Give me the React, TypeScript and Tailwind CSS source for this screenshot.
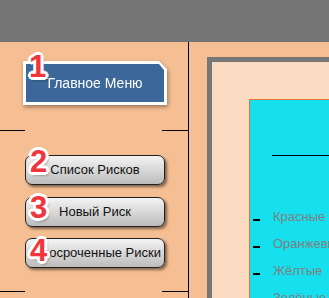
import type { ReactNode } from "react"

const numStyle =
	"absolute font-bold text-[31px] leading-none text-[#f2343c] [font-family:'Liberation_Sans',Arial,sans-serif] [text-shadow:2px_0_0_#fff,-2px_0_0_#fff,0_2px_0_#fff,0_-2px_0_#fff,2px_2px_0_#fff,-2px_-2px_0_#fff,2px_-2px_0_#fff,-2px_2px_0_#fff,3px_0_0_#fff,-3px_0_0_#fff,0_3px_0_#fff,0_-3px_0_#fff,2px_3px_3px_rgba(0,0,0,0.45)]"

function Badge({ n, className }: { n: string; className: string }) {
	return <span className={`${numStyle} ${className}`}>{n}</span>
}

function GrayButton({ children, className }: { children: ReactNode; className: string }) {
	return (
		<div
			className={`w-[140px] h-[30px] rounded-[7px] border border-[#222] bg-gradient-to-b from-[#f4f4f4] to-[#bcbcbc] shadow-[2px_2px_3px_rgba(0,0,0,0.5)] flex items-center justify-center overflow-hidden whitespace-nowrap text-[13px] text-[#111] ${className}`}>
			{children}
		</div>
	)
}

function Divider() {
	return (
		<div className="flex justify-between">
			<div className="w-[25px] h-px bg-black" />
			<div className="w-[26px] h-px bg-black" />
		</div>
	)
}

export default function App() {
	return (
		<div className="w-[329px] h-[298px] overflow-hidden flex flex-col [font-family:'Liberation_Sans',Arial,sans-serif]">
			{/* top band */}
			<div className="h-[42px] bg-[#757575] shrink-0" />

			<div className="flex flex-1 bg-[#f6bf93]">
				{/* left menu */}
				<div className="relative w-[189px] shrink-0 border-r border-black flex flex-col">
					<div className="ml-[23px] mt-[19px] w-[144px] h-[44px] [filter:drop-shadow(1px_2px_2px_rgba(0,0,0,0.4))]">
						<div className="w-full h-full bg-white p-[3px] [clip-path:polygon(0_0,136px_0,100%_8px,100%_100%,0_100%)]">
							<div className="w-full h-full bg-[#3b679b] flex items-center justify-center text-white text-[14px] pt-[1px] [clip-path:polygon(0_0,133px_0,100%_6px,100%_100%,0_100%)]">
								Главное Меню
							</div>
						</div>
					</div>
					<Badge n="1" className="left-[29px] top-[9px]" />

					<div className="mt-[25px]">
						<Divider />
					</div>

					<GrayButton className="ml-[25px] mt-[24px]">Список Рисков</GrayButton>
					<GrayButton className="ml-[25px] mt-[12px]">Новый Риск</GrayButton>
					<GrayButton className="ml-[25px] mt-[11px] justify-end pr-[3px]">Просроченные Риски</GrayButton>

					<Badge n="2" className="left-[30px] top-[104px]" />
					<Badge n="3" className="left-[30px] top-[150px]" />
					<Badge n="4" className="left-[30px] top-[193px]" />

					<div className="mt-[23px]">
						<Divider />
					</div>
				</div>

				{/* right preview */}
				<div className="flex-1 pl-[18px] pt-[15px]">
					<div className="w-[200px] h-[300px] border-[5px] border-[#777] bg-[#fbdcc2] pl-[37px] pt-[37px]">
						<div className="w-[200px] h-[300px] bg-[#17e0ee] border border-[#e0762a] pt-[55px]">
							<div className="ml-[22px] h-px bg-black" />
							<div className="mt-[52px] flex flex-col gap-[9px] text-[13px] text-[#7f7f7f] whitespace-nowrap">
								{["Красные", "Оранжевые", "Жёлтые", "Зелёные"].map((t) => (
									<div key={t} className="flex items-center h-[18px]">
										<div className="ml-[3px] w-[7px] h-[2px] bg-black mt-[5px]" />
										<span className="ml-[13px]">{t}</span>
									</div>
								))}
							</div>
						</div>
					</div>
				</div>
			</div>
		</div>
	)
}
